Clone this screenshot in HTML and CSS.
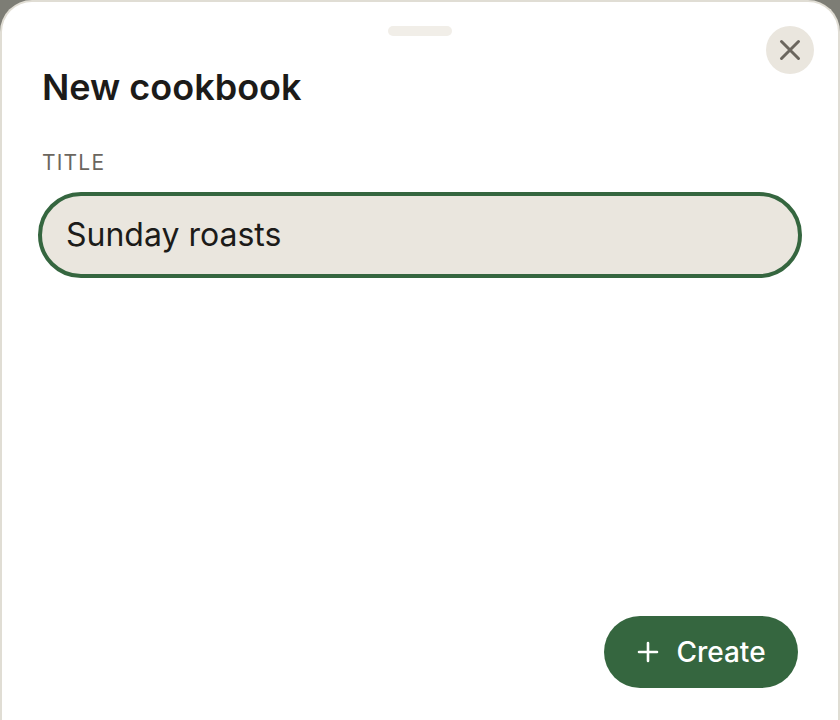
FILE: index.html
```html
<!DOCTYPE html>
<html lang="en">
<head>
<meta charset="utf-8">
<title>New cookbook</title>
<link rel="stylesheet" href="styles.css">
</head>
<body>
<main class="sheet">
  <div class="handle"></div>
  <button class="close" aria-label="Close">
    <svg viewBox="0 0 24 24" width="24" height="24"><path d="M3.5 3.5 20.5 20.5M20.5 3.5 3.5 20.5"/></svg>
  </button>
  <h1 class="heading">New cookbook</h1>
  <label class="label" for="title">TITLE</label>
  <div class="field" id="title">Sunday roasts</div>
  <div class="spacer"></div>
  <div class="actions">
    <button class="create">
      <svg viewBox="0 0 24 24" width="24" height="24"><path d="M12 3V21M3 12H21"/></svg>
      <span>Create</span>
    </button>
  </div>
</main>
</body>
</html>
```

FILE: styles.css
```css
* { box-sizing: border-box; }
html, body { margin: 0; height: 720px; overflow: hidden; background: #7d7d75; }
body { font-family: Inter, "Liberation Sans", sans-serif; }
.sheet {
  position: relative;
  height: 720px;
  display: flex;
  flex-direction: column;
  padding: 24px 40px 32px 40px;
  background: #fff;
  border: 2px solid #e0ddd4;
  border-bottom: 0;
  border-radius: 32px 32px 0 0;
}
.handle { align-self: center; width: 64px; height: 10px; border-radius: 5px; background: #f1eee8; flex: none; }
.close {
  position: absolute;
  top: 24px;
  right: 24px;
  width: 48px;
  height: 48px;
  padding: 0;
  border: 0;
  border-radius: 50%;
  background: #eae6de;
  display: flex;
  align-items: center;
  justify-content: center;
}
.close svg path { fill: none; stroke: #6b665e; stroke-width: 3; stroke-linecap: round; }
.heading { margin: 29px 0 0; font-size: 36px; line-height: 44px; font-weight: 600; color: #1c1b19; }
.label { margin-top: 41px; font-size: 21px; line-height: 26px; letter-spacing: 1.2px; color: #6b665e; font-weight: 400; }
.field {
  margin: 16px -4px 0 -4px;
  height: 86px;
  border: 4px solid #35663f;
  border-radius: 43px;
  background: #eae6de;
  padding: 0 24px 2px;
  display: flex;
  align-items: center;
  font-size: 32px;
  color: #1c1b19;
}
.spacer { flex: 1; }
.actions { display: flex; justify-content: flex-end; }
.create {
  width: 194px;
  height: 72px;
  border: 0;
  border-radius: 36px;
  background: #35663f;
  color: #fff;
  display: flex;
  align-items: center;
  justify-content: center;
  gap: 16px;
  font: 500 28px Inter, "Liberation Sans", sans-serif;
}
.create svg path { fill: none; stroke: #fff; stroke-width: 2.6; stroke-linecap: round; }
```
